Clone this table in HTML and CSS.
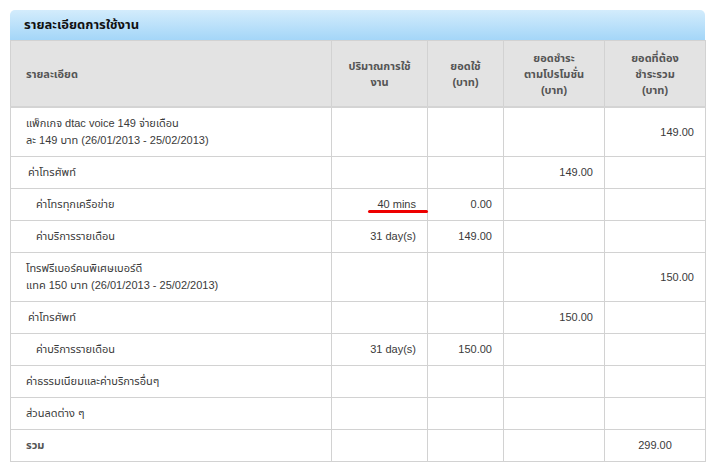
FILE: index.html
```html
<!DOCTYPE html>
<html lang="th">
<head>
<meta charset="utf-8">
<link rel="stylesheet" href="styles.css">
</head>
<body>
<div class="panel">
  <div class="panel-title">รายละเอียดการใช้งาน</div>
  <table class="usage">
    <colgroup>
      <col class="c1"><col class="c2"><col class="c3"><col class="c4"><col class="c5">
    </colgroup>
    <thead>
      <tr>
        <th class="left">รายละเอียด</th>
        <th>ปริมาณการใช้<br>งาน</th>
        <th>ยอดใช้<br>(บาท)</th>
        <th>ยอดชำระ<br>ตามโปรโมชั่น<br>(บาท)</th>
        <th>ยอดที่ต้อง<br>ชำระรวม<br>(บาท)</th>
      </tr>
    </thead>
    <tbody>
      <tr class="tall">
        <td class="l0">แพ็กเกจ dtac voice 149 จ่ายเดือน<br>ละ 149 บาท (26/01/2013 - 25/02/2013)</td>
        <td></td><td></td><td></td><td class="num">149.00</td>
      </tr>
      <tr>
        <td class="l1">ค่าโทรศัพท์</td>
        <td></td><td></td><td class="num">149.00</td><td></td>
      </tr>
      <tr>
        <td class="l2">ค่าโทรทุกเครือข่าย</td>
        <td class="num mark">40 mins<span class="redline"></span></td><td class="num">0.00</td><td></td><td></td>
      </tr>
      <tr>
        <td class="l2">ค่าบริการรายเดือน</td>
        <td class="num">31 day(s)</td><td class="num">149.00</td><td></td><td></td>
      </tr>
      <tr class="tall">
        <td class="l0">โทรฟรีเบอร์คนพิเศษเบอร์ดี<br>แทค 150 บาท (26/01/2013 - 25/02/2013)</td>
        <td></td><td></td><td></td><td class="num">150.00</td>
      </tr>
      <tr>
        <td class="l1">ค่าโทรศัพท์</td>
        <td></td><td></td><td class="num">150.00</td><td></td>
      </tr>
      <tr>
        <td class="l2">ค่าบริการรายเดือน</td>
        <td class="num">31 day(s)</td><td class="num">150.00</td><td></td><td></td>
      </tr>
      <tr>
        <td class="l0">ค่าธรรมเนียมและค่าบริการอื่นๆ</td>
        <td></td><td></td><td></td><td></td>
      </tr>
      <tr>
        <td class="l0">ส่วนลดต่าง ๆ</td>
        <td></td><td></td><td></td><td></td>
      </tr>
      <tr>
        <td class="l0 bold">รวม</td>
        <td></td><td></td><td></td><td class="center">299.00</td>
      </tr>
    </tbody>
  </table>
</div>
</body>
</html>
```

FILE: styles.css
```css
html, body {
  margin: 0;
  padding: 0;
  background: #ffffff;
}
body {
  padding: 10px 9px 0 10px;
  font-family: "Liberation Sans", "Noto Sans Thai", "Noto Sans", sans-serif;
  font-size: 11px;
  color: #3a3a3a;
}
.panel {
  width: 695px;
}
.panel-title {
  height: 30px;
  box-sizing: border-box;
  padding: 7px 0 0 14px;
  border-radius: 5px 5px 0 0;
  background: linear-gradient(#d3ecfc, #a4d6f8);
  font-size: 13px;
  font-weight: bold;
  color: #111;
  line-height: 16px;
}
.usage {
  width: 695px;
  table-layout: fixed;
  border-collapse: collapse;
}
.c1 { width: 321px; }
.c2 { width: 96px; }
.c3 { width: 76px; }
.c4 { width: 101px; }
.c5 { width: 101px; }
.usage th, .usage td {
  border: 1px solid #d2d2d2;
  padding: 0 11px;
  line-height: 17px;
}
.usage th {
  background: #e3e3e3;
  height: 65px;
  font-weight: bold;
  color: #555;
  text-align: center;
  line-height: 16px;
  border-bottom: 2px solid #d4d4d4;
  padding: 0 6px;
}
.usage th.left {
  text-align: left;
  padding-left: 15px;
}
.usage td {
  height: 31px;
  vertical-align: middle;
}
.usage tr.tall td {
  height: 48px;
}
.l0 { padding-left: 15px !important; }
.l1 { padding-left: 17px !important; }
.l2 { padding-left: 25px !important; }
.bold { font-weight: bold; color: #555; }
.num { text-align: right; }
.center { text-align: center; }
.mark { position: relative; }
.redline {
  position: absolute;
  left: 36px;
  right: -1px;
  top: 21px;
  height: 3px;
  border-radius: 2px;
  background: #ee0000;
}
```
